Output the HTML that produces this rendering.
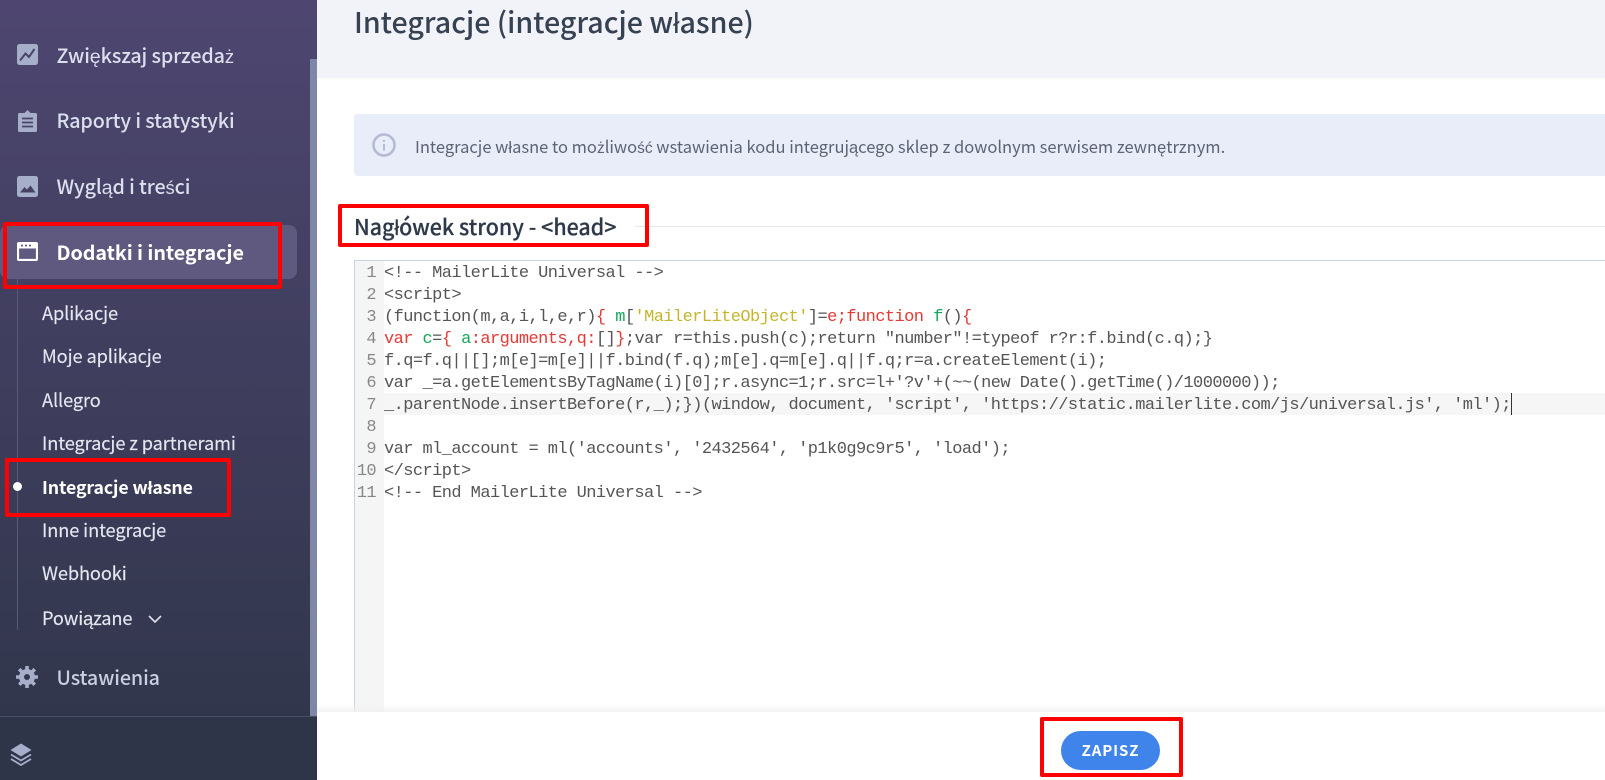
<!DOCTYPE html>
<html lang="pl"><head><meta charset="utf-8"><title>Integracje</title>
<style>
html,body{margin:0;padding:0;width:1605px;height:780px;overflow:hidden;background:#fff}
body{position:relative;font-family:"Noto Sans CJK SC","Liberation Sans",sans-serif}
.a{position:absolute;white-space:pre}
b{font-weight:inherit;font-family:"Liberation Sans",sans-serif;font-size:.94em}
#side{position:absolute;left:0;top:0;width:317px;height:780px;background:linear-gradient(#4e4670,#2f3549)}
#bar{position:absolute;left:310px;top:59px;width:7px;height:657px;background:#7e88a6}
#foot{position:absolute;left:0;top:716px;width:317px;height:64px;background:#2f3549;border-top:1px solid #485066;box-sizing:border-box}
#pill{position:absolute;left:0;top:225px;width:297px;height:54px;background:#5f587f;border-radius:8px}
.m{left:56.500px;font-size:19.700px;line-height:30px;color:#dcdfee;font-weight:500;letter-spacing:-.1px}
.s{left:42px;font-size:18.200px;line-height:26px;color:#e4e6f0;font-weight:400;letter-spacing:-.1px;-webkit-text-stroke:.15px currentColor}
.r{position:absolute;border:4px solid #f00;box-sizing:border-box;border-radius:2px}
#code{position:absolute;left:384px;top:263px;font:17px/22px "Liberation Mono",monospace;color:#555;letter-spacing:-.57px;white-space:pre}
#nums{position:absolute;left:355px;top:263px;width:21px;text-align:right;font:17px/22px "Liberation Mono",monospace;color:#888;letter-spacing:-.57px;white-space:pre}
i{font-style:normal}.R{color:#e53935}.G{color:#12a85a}.Y{color:#c4b52c}
</style></head><body>

<div class="a" style="left:317px;top:0;width:1288px;height:78px;background:#f1f3f8"></div>
<div class="a" style="left:354px;top:0;font-size:28.600px;line-height:44px;color:#364152;font-weight:500">Integracje (integracje własne)</div>

<div class="a" style="left:354px;top:114px;width:1251px;height:62px;background:#e9edf9;border-radius:4px 0 0 4px"></div>
<svg class="a" style="left:372px;top:133px" width="26" height="26" viewBox="0 0 26 26"><circle cx="12" cy="12" r="10.500" fill="none" stroke="#b4bbd3" stroke-width="2.600"/><rect x="11" y="11" width="2" height="6.500" fill="#b4bbd3"/><rect x="11" y="7" width="2" height="2" fill="#b4bbd3"/></svg>
<div class="a" style="left:415px;top:133px;font-size:16.500px;line-height:26px;color:#5c6372">Integracje własne to mo<b>ż</b>liwo<b>ść</b> wstawienia kodu integrującego sklep z dowolnym serwisem zewnętrznym.</div>

<div class="a" style="left:354px;top:211px;font-size:21.400px;line-height:32px;color:#2d3848;font-weight:500;-webkit-text-stroke:.2px #2d3848">Nagłówek strony - &lt;head&gt;</div>
<div class="a" style="left:635px;top:226px;width:970px;height:1px;background:#e8e8ec"></div>

<div class="a" style="left:354px;top:260px;width:1251px;height:1px;background:#c8d3e6"></div>
<div class="a" style="left:354px;top:260px;width:1px;height:452px;background:#c8d3e6"></div>
<div class="a" style="left:355px;top:261px;width:29px;height:451px;background:#f5f5f5"></div>
<div class="a" style="left:384px;top:393px;width:1221px;height:22px;background:#f6f6f6"></div>
<div class="a" style="left:1511px;top:393px;width:1px;height:22px;background:#333"></div>
<div id="nums">1
2
3
4
5
6
7
8
9
10
11</div>
<div id="code">&lt;!-- MailerLite Universal --&gt;
&lt;script&gt;
(function(m,a,i,l,e,r)<i class="R">{</i> <i class="G">m</i>[<i class="Y">'MailerLiteObject'</i>]=<i class="R">e;function </i><i class="G">f</i>()<i class="R">{</i>
<i class="R">var </i><i class="G">c</i>=<i class="R">{ </i><i class="G">a</i><i class="R">:arguments,q:</i>[]<i class="R">}</i>;var r=this.push(c);return "number"!=typeof r?r:f.bind(c.q);}
f.q=f.q||[];m[e]=m[e]||f.bind(f.q);m[e].q=m[e].q||f.q;r=a.createElement(i);
var _=a.getElementsByTagName(i)[0];r.async=1;r.src=l+'?v'+(~~(new Date().getTime()/1000000));
_.parentNode.insertBefore(r,_);})(window, document, 'script', 'https://static.mailerlite.com/js/universal.js', 'ml');

var ml_account = ml('accounts', '2432564', 'p1k0g9c9r5', 'load');
&lt;/script&gt;
&lt;!-- End MailerLite Universal --&gt;</div>

<div class="a" style="left:317px;top:704px;width:1288px;height:8px;background:linear-gradient(rgba(240,240,240,0),rgba(240,240,240,.8))"></div>
<div class="a" style="left:317px;top:712px;width:1288px;height:68px;background:#fff"></div>
<div class="a" style="left:1061px;top:731px;width:99px;height:39px;border-radius:20px;background:#3f84ea;color:#fff;text-align:center;font-size:15px;line-height:39px;font-weight:700;letter-spacing:.9px">ZAPISZ</div>

<div id="side"></div>
<div id="bar"></div>
<div id="foot"></div>
<div id="pill"></div>
<div class="a" style="left:17px;top:279px;width:1px;height:351px;background:#575d79"></div>
<div class="a" style="left:13px;top:482px;width:9px;height:9px;border-radius:50%;background:#fff"></div>

<svg class="a" style="left:17px;top:44px" width="21" height="21" viewBox="0 0 21 21"><rect width="21" height="21" rx="2.500" fill="#a7aeca"/><path d="M3 16.500 8.500 9.500 12 13 17.500 5" fill="none" stroke="#4b4469" stroke-width="2"/></svg>
<svg class="a" style="left:18px;top:110px" width="19" height="22" viewBox="0 0 19 22"><path d="M1.500 3H6.500L9.500 0 12.500 3H17.500Q19 3 19 4.500V20.500Q19 22 17.500 22H1.500Q0 22 0 20.500V4.500Q0 3 1.500 3Z" fill="#a7aeca"/><path d="M4 8.500H15M4 12.500H15M4 16.500H15" stroke="#4a4468" stroke-width="1.800"/></svg>
<svg class="a" style="left:17px;top:176px" width="21" height="21" viewBox="0 0 21 21"><rect width="21" height="21" rx="2.500" fill="#a7aeca"/><path d="M3 16.500 7.500 11 10 13.500 13.500 9.500 18.500 16.500Z" fill="#454264"/></svg>
<svg class="a" style="left:17px;top:242px" width="21" height="19" viewBox="0 0 21 19"><rect x="1" y="1" width="19" height="17" rx="1" fill="none" stroke="#fff" stroke-width="2.200"/><rect x="1" y="1" width="19" height="5.500" fill="#fff"/><rect x="4" y="2.700" width="2" height="1.700" fill="#5f587f"/><rect x="8" y="2.700" width="2" height="1.700" fill="#5f587f"/><rect x="12" y="2.700" width="2" height="1.700" fill="#5f587f"/></svg>
<svg class="a" style="left:16px;top:666px" width="22" height="22" viewBox="0 0 22 22"><circle cx="11" cy="11" r="5.500" fill="none" stroke="#a7aeca" stroke-width="5"/><path d="M11 0V22M0 11H22M3.200 3.200 18.800 18.800M18.800 3.200 3.200 18.800" stroke="#a7aeca" stroke-width="3.600" stroke-dasharray="3.600 14.800 3.600 100"/></svg>
<svg class="a" style="left:10px;top:743px" width="22" height="23" viewBox="0 0 22 23"><path d="M11 .500 21.500 7 11 13.500 .500 7Z" fill="#a7aeca"/><path d="M1 11.500 11 17.500 21 11.500M1 16 11 22 21 16" fill="none" stroke="#a7aeca" stroke-width="1.800"/></svg>

<div class="a m" style="top:40px">Zwiększaj sprzeda<b>ż</b></div>
<div class="a m" style="top:105px">Raporty i statystyki</div>
<div class="a m" style="top:171px">Wygląd i tre<b>ś</b>ci</div>
<div class="a m" style="top:237px;color:#fff;font-weight:700;letter-spacing:-.05px">Dodatki i integracje</div>
<div class="a s" style="top:300px">Aplikacje</div>
<div class="a s" style="top:343px">Moje aplikacje</div>
<div class="a s" style="top:387px">Allegro</div>
<div class="a s" style="top:430px">Integracje z partnerami</div>
<div class="a s" style="top:474px;color:#fff;font-weight:700;font-size:17.700px;-webkit-text-stroke:0">Integracje własne</div>
<div class="a s" style="top:517px">Inne integracje</div>
<div class="a s" style="top:560px">Webhooki</div>
<div class="a s" style="top:605px">Powiązane</div>
<svg class="a" style="left:147px;top:613px" width="16" height="12" viewBox="0 0 16 12"><path d="M2 3 8 9 14 3" fill="none" stroke="#dfe2ec" stroke-width="1.600"/></svg>
<div class="a m" style="top:662px;color:#c9cee0">Ustawienia</div>

<div class="r" style="left:3px;top:222px;width:279px;height:67px"></div>
<div class="r" style="left:5px;top:458px;width:226px;height:59px"></div>
<div class="r" style="left:338px;top:204px;width:311px;height:43px"></div>
<div class="r" style="left:1040px;top:717px;width:143px;height:60px"></div>
</body></html>
